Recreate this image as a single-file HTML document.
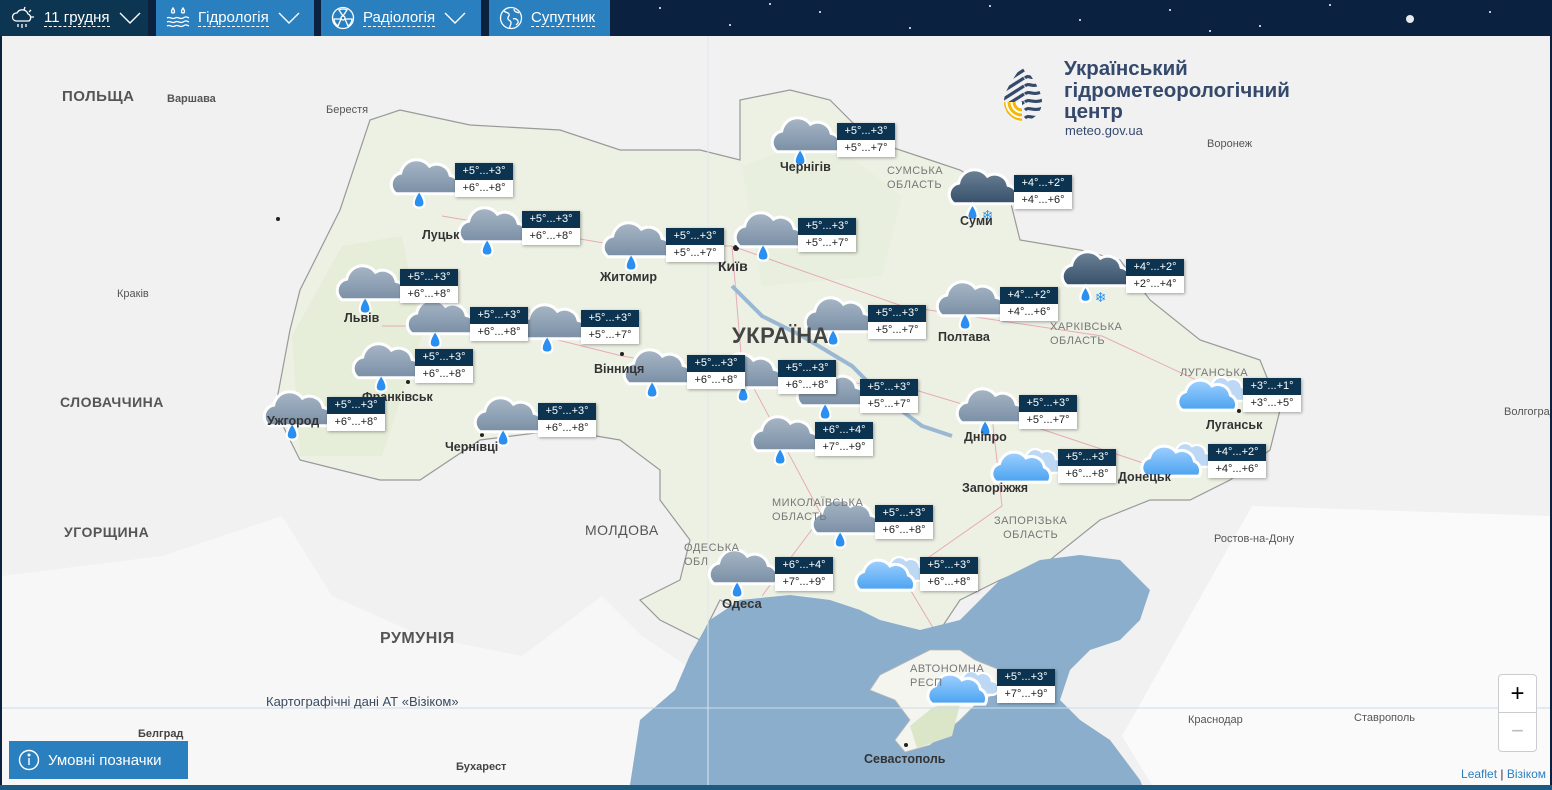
<!DOCTYPE html>
<html><head><meta charset="utf-8">
<style>
*{margin:0;padding:0;box-sizing:border-box}
body{width:1552px;height:790px;overflow:hidden;font-family:"Liberation Sans",sans-serif;background:#0a2240;position:relative}
#map{position:absolute;left:2px;top:36px;width:1548px;height:749px;background:#efefef;overflow:hidden}
.top{position:absolute;top:0;height:36px;color:#fff;font-size:15px;display:flex;align-items:center;padding-left:10px}
.top span.t{border-bottom:1px dashed #fff;line-height:17px;margin-left:8px}
.chev{margin-left:9px;width:22px;height:14px}
.lb{position:absolute;width:58px;font-size:11px;box-shadow:1px 1px 3px rgba(0,0,0,.35)}
.lb div{height:17px;line-height:17px;text-align:center}
.lb .a{background:#0c3450;color:#fff}
.lb .b{background:#fff;color:#222}
.pl{position:absolute;color:#555;font-size:11px;white-space:nowrap}
.cn{position:absolute;color:#555;font-size:14px;font-weight:bold;letter-spacing:.5px;white-space:nowrap}
.ct{position:absolute;color:#333;font-size:12.5px;font-weight:bold;white-space:nowrap}
.ob{position:absolute;color:#777;font-size:11px;letter-spacing:.5px;white-space:nowrap;line-height:14px}
</style></head><body>
<div class="top" style="left:0;width:148px;background:#0b3550">
<svg width="26" height="24" viewBox="0 0 26 24" fill="none" stroke="#fff" stroke-width="1.3"><path d="M6 15a4 4 0 0 1 1-8 6 6 0 0 1 11 1 4 4 0 0 1 1 7z"/><path d="M8 18v3M12 18v4M16 18v3M14 4l1-3M19 6l2-2M21 11h3"/></svg>
<span class="t">11 грудня</span><svg class="chev" viewBox="0 0 22 14" fill="none" stroke="#fff" stroke-width="1.4"><path d="M1 2l10 10 10-10"/></svg></div>
<div class="top" style="left:156px;width:158px;background:#2a7fbe">
<svg width="24" height="24" viewBox="0 0 24 24" fill="none" stroke="#fff" stroke-width="1.3"><path d="M7 2c-2 3-2 5 0 5s2-2 0-5zM17 2c-2 3-2 5 0 5s2-2 0-5zM1 12c3-2 5 2 8 0s5 2 8 0 4-1 6 0M1 16c3-2 5 2 8 0s5 2 8 0 4-1 6 0M1 20c3-2 5 2 8 0s5 2 8 0 4-1 6 0"/></svg>
<span class="t">Гідрологія</span><svg class="chev" viewBox="0 0 22 14" fill="none" stroke="#fff" stroke-width="1.4"><path d="M1 2l10 10 10-10"/></svg></div>
<div class="top" style="left:321px;width:160px;background:#2a7fbe">
<svg width="24" height="24" viewBox="0 0 24 24" fill="none" stroke="#fff" stroke-width="1.3"><circle cx="12" cy="12" r="10.5"/><circle cx="12" cy="12" r="2"/><path d="M12 10L8 4a9 9 0 0 1 8 0zM10 13l-7 0a9 9 0 0 0 4 7zM14 13l7 0a9 9 0 0 1-4 7z"/></svg>
<span class="t">Радіологія</span><svg class="chev" viewBox="0 0 22 14" fill="none" stroke="#fff" stroke-width="1.4"><path d="M1 2l10 10 10-10"/></svg></div>
<div class="top" style="left:489px;width:121px;background:#2a7fbe">
<svg width="24" height="24" viewBox="0 0 24 24" fill="none" stroke="#fff" stroke-width="1.3"><circle cx="12" cy="12" r="10.5"/><path d="M5 5c2 2 4 1 5 3s-2 3-1 5 3 1 3 4-2 3-1 5M15 3c0 3 3 3 5 4M14 13c2-1 4 0 5 2s-1 3-2 4"/></svg>
<span class="t">Супутник</span></div>
<svg style="position:absolute;left:610px;top:0" width="942" height="36"><g fill="#fff"><circle cx="800" cy="19" r="4" opacity=".9"/><circle cx="50" cy="8" r="1"/><circle cx="120" cy="25" r="1"/><circle cx="210" cy="12" r="1"/><circle cx="300" cy="28" r="1"/><circle cx="380" cy="6" r="1"/><circle cx="470" cy="20" r="1"/><circle cx="560" cy="10" r="1"/><circle cx="650" cy="26" r="1"/><circle cx="720" cy="5" r="1"/><circle cx="880" cy="12" r="1"/><circle cx="160" cy="4" r="1"/><circle cx="600" cy="31" r="1"/></g></svg>

<div id="map">
<svg width="1548" height="749" style="position:absolute;left:0;top:0">
<defs>
<linearGradient id="cg" x1="0" y1="0" x2="0" y2="1"><stop offset="0" stop-color="#a7b6c6"/><stop offset="1" stop-color="#7a8fa5"/></linearGradient>
<linearGradient id="dg" x1="0" y1="0" x2="0" y2="1"><stop offset="0" stop-color="#6c8296"/><stop offset="1" stop-color="#36506a"/></linearGradient>
<linearGradient id="lg" x1="0" y1="0" x2="0" y2="1"><stop offset="0" stop-color="#9fd0ff"/><stop offset="1" stop-color="#4aa3f0"/></linearGradient>
<g id="cl" transform="scale(1.15)"><path d="M-6 9c-6 9-6 15 0 15s6-6 0-15z" fill="#2a8ff0" stroke="#fff" stroke-width="2"/><path d="M-26 12a10 10 0 0 1 4-18a14 14 0 0 1 25-6a12 12 0 0 1 18 8a10 10 0 0 1 6 16z" fill="url(#cg)" stroke="#fff" stroke-width="2.6"/><path d="M-6 11c-5 8-5 12 0 12s5-4 0-12z" fill="#2a8ff0"/></g>
<g id="dk" transform="scale(1.15)"><path d="M-26 12a10 10 0 0 1 4-18a14 14 0 0 1 25-6a12 12 0 0 1 18 8a10 10 0 0 1 6 16z" fill="url(#dg)" stroke="#fff" stroke-width="2.6"/><path d="M-10 12c-6 9-6 14 0 14s6-5 0-14z" fill="#2a8ff0" stroke="#fff" stroke-width="2"/><text x="-2" y="26" font-size="12" fill="#2a8ff0" font-family="DejaVu Sans">❄</text></g>
<g id="lt" transform="scale(1.15)"><path d="M0 -6a8 8 0 0 1 14-6a8 8 0 0 1 12 6a6 6 0 0 1 0 12h-14z" fill="#bcd8f5" stroke="#fff" stroke-width="2"/><path d="M-26 14a9 9 0 0 1 3-16a13 13 0 0 1 23-5a11 11 0 0 1 16 8a9 9 0 0 1 4 13z" fill="url(#lg)" stroke="#fff" stroke-width="2.6"/></g>
</defs>
<rect width="1548" height="749" fill="#f1f1f1"/>
<path d="M0 540 L160 520 280 480 330 560 420 600 520 620 600 560 640 600 700 640 640 749 0 749z" fill="#f7f7f7"/>
<path d="M1250 470 L1548 480 1548 749 1150 749 1120 700z" fill="#fafafa"/>
<path d="M273 374 L288 294 298 254 338 174 368 84 398 74 468 89 558 94 618 114 698 114 738 124 738 64 788 54 828 64 868 104 928 124 958 134 1008 164 1018 204 1078 214 1118 224 1148 264 1198 304 1258 324 1278 374 1268 414 1228 444 1188 464 1148 464 1098 484 1048 524 998 544 958 564 938 594 988 624 998 664 958 684 928 724 898 734 868 704 838 684 798 664 758 584 718 564 698 604 658 584 638 564 678 544 688 504 658 464 658 434 618 404 558 394 478 404 418 444 378 444 338 434 298 424z" fill="#edf1e4" stroke="#999" stroke-width="1.2"/>
<path d="M290 300 L340 210 400 200 420 300 380 420 298 420z" fill="#e3ecd6" opacity=".8"/>
<path d="M740 130 L820 100 900 160 880 240 760 250z" fill="#e6eedb" opacity=".7"/>
<g stroke="#e7aab8" stroke-width="1" fill="none"><path d="M440 180 L620 210 730 210 900 270 1100 300 1250 370"/><path d="M380 290 L500 290 620 320 740 340 900 350 1000 380 1150 430"/><path d="M730 210 L740 330 820 480 760 560"/><path d="M990 380 L1000 470 900 540 960 640"/></g>
<path d="M730 250 L760 280 800 300 850 330 880 360 920 390 950 400" stroke="#9ab8d2" stroke-width="4" fill="none"/>
<path d="M628 749 L638 684 673 654 688 619 708 584 738 564 788 559 828 564 858 574 878 584 918 594 958 584 978 564 998 544 1038 524 1078 519 1118 524 1148 554 1138 584 1118 604 1088 614 1068 634 1058 664 1078 684 1108 704 1138 744 1140 749z" fill="#8aaecb"/>
<path d="M898 629 L928 614 958 614 973 624 998 634 1018 639 1030 644 1008 654 978 664 958 684 928 709 903 716 893 704 908 684 893 664 868 654 878 639z" fill="#f4f5ef" stroke="#bbb" stroke-width=".8"/>
<path d="M908 690 L930 672 960 660 950 700 915 712z" fill="#dbe6c8"/>
<line x1="0" y1="672" x2="1548" y2="672" stroke="#cbdcec" stroke-width="1"/>
<line x1="706" y1="0" x2="706" y2="749" stroke="#dfe8f0" stroke-width="1"/>
<g fill="#222"><circle cx="276" cy="183" r="2"/><circle cx="734" cy="212" r="3"/><circle cx="1237" cy="375" r="2"/><circle cx="904" cy="709" r="2"/><circle cx="406" cy="346" r="2"/><circle cx="620" cy="318" r="2"/><circle cx="480" cy="399" r="2"/></g>
<use href="#cl" x="424" y="144"/><use href="#cl" x="492" y="192"/><use href="#cl" x="636" y="207"/><use href="#cl" x="768" y="197"/><use href="#cl" x="805" y="102"/>
<use href="#dk" x="982" y="154"/><use href="#dk" x="1095" y="236"/><use href="#cl" x="970" y="266"/>
<use href="#cl" x="370" y="250"/><use href="#cl" x="440" y="284"/><use href="#cl" x="552" y="289"/><use href="#cl" x="838" y="282"/>
<use href="#cl" x="386" y="328"/><use href="#cl" x="657" y="334"/><use href="#cl" x="748" y="338"/><use href="#cl" x="830" y="356"/>
<use href="#cl" x="297" y="376"/><use href="#cl" x="508" y="382"/><use href="#cl" x="785" y="401"/><use href="#cl" x="990" y="373"/>
<use href="#lt" x="1210" y="358"/><use href="#lt" x="1024" y="430"/><use href="#lt" x="1174" y="424"/>
<use href="#cl" x="845" y="484"/><use href="#cl" x="742" y="534"/>
<use href="#lt" x="888" y="538"/><use href="#lt" x="960" y="652"/>
</svg>

<div class="cn" style="left:60px;top:52px;font-size:15px">ПОЛЬЩА</div>
<div class="pl" style="left:165px;top:57px;font-weight:bold;color:#555">Варшава</div>
<div class="pl" style="left:324px;top:68px">Берестя</div>
<div class="pl" style="left:115px;top:252px">Краків</div>
<div class="cn" style="left:58px;top:358px">СЛОВАЧЧИНА</div>
<div class="cn" style="left:62px;top:488px">УГОРЩИНА</div>
<div class="cn" style="left:378px;top:594px;font-size:16px">РУМУНІЯ</div>
<div class="cn" style="left:583px;top:486px;font-weight:normal">МОЛДОВА</div>
<div class="cn" style="left:730px;top:287px;font-size:22px;color:#444">УКРАЇНА</div>
<div class="pl" style="left:1205px;top:102px">Воронеж</div>
<div class="pl" style="left:1502px;top:370px">Волгоград</div>
<div class="pl" style="left:1212px;top:497px">Ростов-на-Дону</div>
<div class="pl" style="left:1186px;top:678px">Краснодар</div>
<div class="pl" style="left:1352px;top:676px">Ставрополь</div>
<div class="ct" style="left:136px;top:692px;font-size:11px;color:#444">Белград</div>
<div class="ct" style="left:454px;top:725px;font-size:11px;color:#444">Бухарест</div>
<div class="ct" style="left:862px;top:716px">Севастополь</div>
<div class="ct" style="left:420px;top:192px">Луцьк</div>
<div class="ct" style="left:598px;top:234px">Житомир</div>
<div class="ct" style="left:716px;top:222px;font-size:14px">Київ</div>
<div class="ct" style="left:778px;top:124px">Чернігів</div>
<div class="ct" style="left:958px;top:178px">Суми</div>
<div class="ct" style="left:936px;top:294px">Полтава</div>
<div class="ct" style="left:342px;top:275px">Львів</div>
<div class="ct" style="left:360px;top:354px">Франківськ</div>
<div class="ct" style="left:265px;top:378px">Ужгород</div>
<div class="ct" style="left:443px;top:404px">Чернівці</div>
<div class="ct" style="left:592px;top:326px">Вінниця</div>
<div class="ct" style="left:962px;top:394px">Дніпро</div>
<div class="ct" style="left:960px;top:445px">Запоріжжя</div>
<div class="ct" style="left:1116px;top:434px">Донецьк</div>
<div class="ct" style="left:1204px;top:382px">Луганськ</div>
<div class="ct" style="left:720px;top:560px;font-size:13px">Одеса</div>
<div class="ob" style="left:885px;top:128px">СУМСЬКА<br>ОБЛАСТЬ</div>
<div class="ob" style="left:1048px;top:284px">ХАРКІВСЬКА<br>ОБЛАСТЬ</div>
<div class="ob" style="left:992px;top:478px;text-align:center">ЗАПОРІЗЬКА<br>ОБЛАСТЬ</div>
<div class="ob" style="left:770px;top:460px">МИКОЛАЇВСЬКА<br>ОБЛАСТЬ</div>
<div class="ob" style="left:682px;top:505px">ОДЕСЬКА<br>ОБЛ</div>
<div class="ob" style="left:908px;top:626px">АВТОНОМНА<br>РЕСП</div>
<div class="ob" style="left:1178px;top:330px">ЛУГАНСЬКА</div>
<div class="pl" style="left:264px;top:658px;font-size:13px;color:#3a4b60">Картографічні дані АТ «Візіком»</div>

<svg style="position:absolute;left:998px;top:26px" width="46" height="60" viewBox="0 0 46 60">
<defs><clipPath id="drop"><path d="M23 2C14 16 4 28 4 40a19 19 0 0 0 38 0C42 28 32 16 23 2z"/></clipPath></defs>
<g clip-path="url(#drop)">
<g stroke="#34496b" stroke-width="3.2" fill="none"><path d="M2 22l22-14M2 30l22-14M2 38l22-14M2 46l22-14M2 54l22-14"/><path d="M25 16c4-4 6 2 10-2M25 24c4-4 7 2 14-2M25 32c4-4 8 2 16-2M25 40c4-4 8 2 18-2M25 48c4-4 8 2 18-2M25 56c4-4 8 2 18-2"/></g>
<rect x="0" y="40" width="22" height="24" fill="#fff"/>
<g stroke="#f5b700" stroke-width="3" fill="none"><path d="M4 40a18 18 0 0 0 18 18M9 40a13 13 0 0 0 13 13M14 40a8 8 0 0 0 8 8"/></g>
</g></svg>
<div style="position:absolute;left:1062px;top:22px;color:#34496b;font-weight:bold;font-size:20.5px;line-height:21.5px">Український<br>гідрометеорологічний<br>центр</div>
<div style="position:absolute;left:1063px;top:87px;color:#34496b;font-size:13px">meteo.gov.ua</div>

<div class="lb" style="left:453px;top:127px"><div class="a">+5°...+3°</div><div class="b">+6°...+8°</div></div>
<div class="lb" style="left:520px;top:175px"><div class="a">+5°...+3°</div><div class="b">+6°...+8°</div></div>
<div class="lb" style="left:664px;top:192px"><div class="a">+5°...+3°</div><div class="b">+5°...+7°</div></div>
<div class="lb" style="left:796px;top:182px"><div class="a">+5°...+3°</div><div class="b">+5°...+7°</div></div>
<div class="lb" style="left:835px;top:87px"><div class="a">+5°...+3°</div><div class="b">+5°...+7°</div></div>
<div class="lb" style="left:1012px;top:139px"><div class="a">+4°...+2°</div><div class="b">+4°...+6°</div></div>
<div class="lb" style="left:1124px;top:223px"><div class="a">+4°...+2°</div><div class="b">+2°...+4°</div></div>
<div class="lb" style="left:998px;top:251px"><div class="a">+4°...+2°</div><div class="b">+4°...+6°</div></div>
<div class="lb" style="left:398px;top:233px"><div class="a">+5°...+3°</div><div class="b">+6°...+8°</div></div>
<div class="lb" style="left:468px;top:271px"><div class="a">+5°...+3°</div><div class="b">+6°...+8°</div></div>
<div class="lb" style="left:579px;top:274px"><div class="a">+5°...+3°</div><div class="b">+5°...+7°</div></div>
<div class="lb" style="left:866px;top:269px"><div class="a">+5°...+3°</div><div class="b">+5°...+7°</div></div>
<div class="lb" style="left:413px;top:313px"><div class="a">+5°...+3°</div><div class="b">+6°...+8°</div></div>
<div class="lb" style="left:685px;top:319px"><div class="a">+5°...+3°</div><div class="b">+6°...+8°</div></div>
<div class="lb" style="left:776px;top:324px"><div class="a">+5°...+3°</div><div class="b">+6°...+8°</div></div>
<div class="lb" style="left:858px;top:343px"><div class="a">+5°...+3°</div><div class="b">+5°...+7°</div></div>
<div class="lb" style="left:325px;top:361px"><div class="a">+5°...+3°</div><div class="b">+6°...+8°</div></div>
<div class="lb" style="left:536px;top:367px"><div class="a">+5°...+3°</div><div class="b">+6°...+8°</div></div>
<div class="lb" style="left:813px;top:386px"><div class="a">+6°...+4°</div><div class="b">+7°...+9°</div></div>
<div class="lb" style="left:1017px;top:359px"><div class="a">+5°...+3°</div><div class="b">+5°...+7°</div></div>
<div class="lb" style="left:1241px;top:342px"><div class="a">+3°...+1°</div><div class="b">+3°...+5°</div></div>
<div class="lb" style="left:1056px;top:413px"><div class="a">+5°...+3°</div><div class="b">+6°...+8°</div></div>
<div class="lb" style="left:1206px;top:408px"><div class="a">+4°...+2°</div><div class="b">+4°...+6°</div></div>
<div class="lb" style="left:873px;top:469px"><div class="a">+5°...+3°</div><div class="b">+6°...+8°</div></div>
<div class="lb" style="left:773px;top:521px"><div class="a">+6°...+4°</div><div class="b">+7°...+9°</div></div>
<div class="lb" style="left:918px;top:521px"><div class="a">+5°...+3°</div><div class="b">+6°...+8°</div></div>
<div class="lb" style="left:995px;top:633px"><div class="a">+5°...+3°</div><div class="b">+7°...+9°</div></div>

<div style="position:absolute;left:7px;top:705px;width:179px;height:38px;background:#2a7fbe;color:#fff;font-size:15px;display:flex;align-items:center;padding-left:9px">
<svg width="22" height="22" viewBox="0 0 22 22" fill="none" stroke="#fff" stroke-width="1.4"><circle cx="11" cy="11" r="9.5"/><path d="M11 9v7"/><circle cx="11" cy="6" r=".8" fill="#fff"/></svg>
<span style="margin-left:8px">Умовні позначки</span></div>
<div style="position:absolute;left:1496px;top:638px;width:39px;height:78px;background:#fff;border:1px solid #ccc;border-radius:4px">
<div style="height:38px;border-bottom:1px solid #ccc;text-align:center;font-size:24px;line-height:38px;color:#000">+</div>
<div style="height:38px;text-align:center;font-size:22px;line-height:36px;color:#bbb">−</div></div>
<div style="position:absolute;right:4px;top:731px;font-size:12px;color:#2a7fbe">Leaflet <span style="color:#333">|</span> Візіком</div>
</div>
<div style="position:absolute;left:0;top:785px;width:1552px;height:5px;background:#1e5a80"></div>
</body></html>
